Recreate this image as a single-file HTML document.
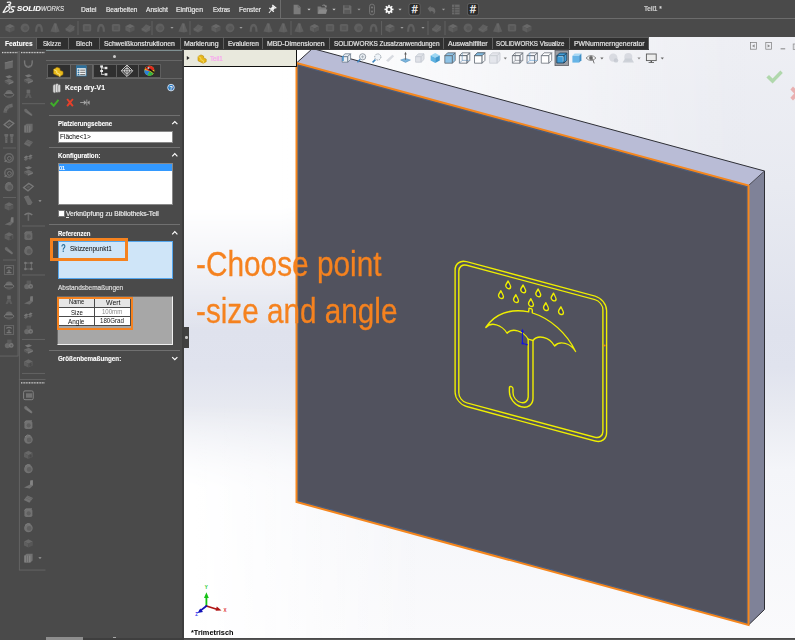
<!DOCTYPE html>
<html lang="de"><head><meta charset="utf-8"><title>SOLIDWORKS - Teil1</title>
<style>
html,body{margin:0;padding:0;}
body{width:795px;height:640px;overflow:hidden;background:#4a4a4a;position:relative;font-family:"Liberation Sans",sans-serif;}
.t{position:absolute;white-space:nowrap;transform-origin:0 50%;display:block;}
.r{position:absolute;}
svg{position:absolute;left:0;top:0;overflow:visible;}
</style></head><body>
<div class="r" style="left:184px;top:37px;width:611px;height:601px;background:linear-gradient(to bottom,#eeeff4 0%,#e8eaf1 25%,#dfe2ed 49%,#e0e3ee 55%,#e8eaf1 62%,#f4f5f9 72%,#fafafc 100%);"></div>
<div class="r" style="left:184px;top:37px;width:611px;height:601px;background:linear-gradient(to right,#ffffff 0%,#ffffff 16%,rgba(255,255,255,0.45) 55%,rgba(255,255,255,0) 92%);-webkit-mask-image:linear-gradient(to bottom,#000 0%,#000 28%,rgba(0,0,0,0) 49%);mask-image:linear-gradient(to bottom,#000 0%,#000 28%,rgba(0,0,0,0) 49%);"></div>
<div class="r" style="left:184px;top:37px;width:611px;height:601px;background:linear-gradient(to right,#ffffff 0%,rgba(255,255,255,0) 40%);-webkit-mask-image:linear-gradient(to bottom,rgba(0,0,0,0) 61%,#000 75%);mask-image:linear-gradient(to bottom,rgba(0,0,0,0) 61%,#000 75%);"></div>
<svg width="795" height="640" viewBox="0 0 795 640">
<polygon points="296.5,63 312.5,48.5 764.5,171 748.5,185.5" fill="#b9bcd6"/>
<polygon points="748.5,185.5 764.5,171 764.5,609.5 748.5,625" fill="#7f8298"/>
<polygon points="296.5,63 748.5,185.5 748.5,625 296.5,502" fill="#51525e"/>
<polyline points="296.5,63 312.5,48.5 764.5,171 764.5,609.5 748.5,625" fill="none" stroke="#2e2f36" stroke-width="1"/>
<line x1="748.5" y1="185.5" x2="764.5" y2="171" stroke="#3c3d47" stroke-width="0.9"/>
<polygon points="298,65.2 747,186.9 747,622.8 298,500.6" fill="none" stroke="#4a6b9c" stroke-width="0.8" opacity="0.7"/>
<polygon points="296.5,63 748.5,185.5 748.5,625 296.5,502" fill="none" stroke="#f5871f" stroke-width="2" stroke-linejoin="miter"/>
<g transform="translate(530.6,0) skewY(15) translate(-530.6,0)" fill="none" stroke="#efef00" stroke-width="1.4" stroke-linecap="round" stroke-linejoin="round">
<rect x="455.1" y="278.8" width="151.5" height="144.9" rx="11.5"/>
<rect x="458.8" y="282.4" width="144.1" height="137.6" rx="8"/>
<path d="M508.2,287.0 C509.2,289.2 510.65,290.95 510.65,292.15 A2.45,2.45 0 1 1 505.75,292.15 C505.75,290.95 507.2,289.2 508.2,287.0 Z" fill="#26266c" fill-opacity="0.45"/>
<path d="M523.2,287.0 C524.2,289.2 525.6500000000001,290.95 525.6500000000001,292.15 A2.45,2.45 0 1 1 520.75,292.15 C520.75,290.95 522.2,289.2 523.2,287.0 Z" fill="#26266c" fill-opacity="0.45"/>
<path d="M538.25,287.0 C539.25,289.2 540.7,290.95 540.7,292.15 A2.45,2.45 0 1 1 535.8,292.15 C535.8,290.95 537.25,289.2 538.25,287.0 Z" fill="#26266c" fill-opacity="0.45"/>
<path d="M553.6,287.0 C554.6,289.2 556.0500000000001,290.95 556.0500000000001,292.15 A2.45,2.45 0 1 1 551.15,292.15 C551.15,290.95 552.6,289.2 553.6,287.0 Z" fill="#26266c" fill-opacity="0.45"/>
<path d="M501,298.70000000000005 C502,300.90000000000003 503.45,302.65000000000003 503.45,303.85 A2.45,2.45 0 1 1 498.55,303.85 C498.55,302.65000000000003 500,300.90000000000003 501,298.70000000000005 Z" fill="#26266c" fill-opacity="0.45"/>
<path d="M516,298.70000000000005 C517,300.90000000000003 518.45,302.65000000000003 518.45,303.85 A2.45,2.45 0 1 1 513.55,303.85 C513.55,302.65000000000003 515,300.90000000000003 516,298.70000000000005 Z" fill="#26266c" fill-opacity="0.45"/>
<path d="M531,298.70000000000005 C532,300.90000000000003 533.45,302.65000000000003 533.45,303.85 A2.45,2.45 0 1 1 528.55,303.85 C528.55,302.65000000000003 530,300.90000000000003 531,298.70000000000005 Z" fill="#26266c" fill-opacity="0.45"/>
<path d="M546,298.70000000000005 C547,300.90000000000003 548.45,302.65000000000003 548.45,303.85 A2.45,2.45 0 1 1 543.55,303.85 C543.55,302.65000000000003 545,300.90000000000003 546,298.70000000000005 Z" fill="#26266c" fill-opacity="0.45"/>
<path d="M561,298.70000000000005 C562,300.90000000000003 563.45,302.65000000000003 563.45,303.85 A2.45,2.45 0 1 1 558.55,303.85 C558.55,302.65000000000003 560,300.90000000000003 561,298.70000000000005 Z" fill="#26266c" fill-opacity="0.45"/>
<path d="M485.8,339.5 A52,52 0 0 1 528.6,312.4 L528.9,309.6 Q528.9,308.6 529.9,308.6 L531.3,308.6 Q532.3,308.6 532.3,309.6 L532.3,312.4 A52,52 0 0 1 575.6,339.5 A13,13 0 0 0 554.6,339.5 A13.2,13.2 0 0 0 533,339.8 L528.2,339.8 A13.2,13.2 0 0 0 507,339.5 A13,13 0 0 0 485.8,339.5 Z"/>
<path d="M533,339.8 L533,397.5 A11.8,11.8 0 0 1 509.4,397.5 L509.4,393.5 A1.8,1.8 0 0 1 513,393.5 L513,397.5 A7.6,7.6 0 0 0 528.2,397.5 L528.2,339.8"/>
</g>
<g stroke="#1010e8" fill="#1010e8" stroke-width="1"><line x1="522.4" y1="343.5" x2="522.4" y2="331"/><polygon points="522.4,328.8 521,332 523.8,332" stroke="none"/><line x1="522.4" y1="343.5" x2="526" y2="344.3"/><circle cx="522.6" cy="343.4" r="1.1" stroke="none"/><circle cx="526.8" cy="344.6" r="0.9" stroke="none"/></g>
<circle cx="604.6" cy="345.6" r="1" fill="#e8861f"/>
<path d="M766.4,77.6 L769,75 L772.6,78.6 L780.4,70.6 L782.8,73 L772.6,83.6 Z" fill="#add6a8" opacity="0.95"/>
<path d="M790.4,89.4 L793,86.6 L795,88.6 L795,98.4 L793,100.6 L790.4,97.8 L794.2,93.6 Z" fill="#e9acac" opacity="0.95"/>
<g stroke-linecap="round"><line x1="206.4" y1="606" x2="206.4" y2="597" stroke="#15c215" stroke-width="1.8"/><polygon points="206.4,592.3 204,598 208.8,598" fill="#15c215"/><line x1="206.4" y1="606" x2="216" y2="609" stroke="#b01414" stroke-width="1.8"/><polygon points="221.5,610.4 215.6,610.8 216.8,606.6" fill="#b01414"/><line x1="206.4" y1="606" x2="200.5" y2="610.6" stroke="#1212b8" stroke-width="1.8"/><polygon points="197.6,613 200.2,608.6 203,612" fill="#1212b8"/></g>
<text x="204.8" y="588.6" font-size="4.6" font-weight="bold" fill="#20c820" font-family="Liberation Sans, sans-serif">Y</text>
<text x="223.6" y="611.6" font-size="4.6" font-weight="bold" fill="#e03030" font-family="Liberation Sans, sans-serif">X</text>
<text x="195.2" y="616" font-size="4.6" font-weight="bold" fill="#3030f0" font-family="Liberation Sans, sans-serif">Z</text>
</svg>
<span class="t" style="left:196.00px;top:242.87px;font-size:35.6px;line-height:42.72px;color:#f5821f;transform:scaleX(0.8378);-webkit-text-stroke:0.3px #f5821f;">-Choose point</span>
<span class="t" style="left:196.00px;top:289.77px;font-size:35.6px;line-height:42.72px;color:#f5821f;transform:scaleX(0.8349);-webkit-text-stroke:0.3px #f5821f;">-size and angle</span>
<span class="t" style="left:190.60px;top:628.86px;font-size:7.2px;line-height:8.64px;color:#000;transform:scaleX(1.0236);font-weight:bold;">*Trimetrisch</span>
<div class="r" style="left:184px;top:50px;width:112px;height:16px;background:#e9e9dd;border-right:0.8px solid #111;border-bottom:0.9px solid #111;"></div>
<svg width="795" height="640"><polygon points="186.8,56 189.6,58 186.8,60" fill="#222"/><path d="M198,56.5 l3,-1.6 l2.6,1.2 l0,1.8 l2.6,1.2 l0,2.6 l-3,1.6 l-5.2,-2.6 Z" fill="#e8b818" stroke="#b88a08" stroke-width="0.6"/><path d="M198,56.5 l2.8,1.3 l0,1.8 l2.6,1.2 l0,2.4" fill="none" stroke="#fff2a0" stroke-width="0.5"/></svg>
<span class="t" style="left:210.20px;top:54.50px;font-size:7.3px;line-height:8.76px;color:#f7a3ee;transform:scaleX(0.8525);-webkit-text-stroke:0.2px #f7a3ee;">Teil1</span>
<div class="r" style="left:184px;top:638.5px;width:611px;height:1.5px;background:#565656;"></div>
<div class="r" style="left:0px;top:0px;width:795px;height:37px;background:#4a4a4a;"></div>
<div class="r" style="left:0px;top:18px;width:795px;height:0.9px;background:#6c6c6c;"></div>
<div class="r" style="left:280px;top:0px;width:0.9px;height:18px;background:#6c6c6c;"></div>
<svg width="795" height="640"><g fill="none" stroke="#f4f4f4" stroke-width="1.3" stroke-linecap="round" stroke-linejoin="round"><path d="M7.4,2.4 Q10.6,1.6 10.8,3.2 Q10.6,4.6 8.6,5 Q10.4,5.2 10,6.4"/><path d="M3.2,12.4 L6.8,6.4 Q10.2,6.8 9.2,9.2 Q8,11.6 3.2,12.4 Z"/><path d="M14.8,6.8 Q11.4,6 10.9,7.8 Q10.8,9 12.6,9.6 Q14.2,10.4 13.2,11.6 Q12,12.6 9.4,12"/></g></svg>
<span class="t" style="left:17.10px;top:4.98px;font-size:6.7px;line-height:8.04px;color:#ffffff;transform:scaleX(1.1674);-webkit-text-stroke:0.1px #ffffff;font-weight:bold;font-style:italic;">SOLID</span>
<span class="t" style="left:40.50px;top:4.98px;font-size:6.7px;line-height:8.04px;color:#dcdcdc;transform:scaleX(0.9126);-webkit-text-stroke:0.2px #dcdcdc;font-style:italic;">WORKS</span>
<span class="t" style="left:81.30px;top:5.67px;font-size:6.4px;line-height:7.68px;color:#e6e6e6;transform:scaleX(1.0441);-webkit-text-stroke:0.2px #e6e6e6;">Datei</span>
<span class="t" style="left:105.70px;top:5.67px;font-size:6.4px;line-height:7.68px;color:#e6e6e6;transform:scaleX(1.0143);-webkit-text-stroke:0.2px #e6e6e6;">Bearbeiten</span>
<span class="t" style="left:146.00px;top:5.67px;font-size:6.4px;line-height:7.68px;color:#e6e6e6;transform:scaleX(1.0387);-webkit-text-stroke:0.2px #e6e6e6;">Ansicht</span>
<span class="t" style="left:176.00px;top:5.67px;font-size:6.4px;line-height:7.68px;color:#e6e6e6;transform:scaleX(1.0686);-webkit-text-stroke:0.2px #e6e6e6;">Einfügen</span>
<span class="t" style="left:212.60px;top:5.67px;font-size:6.4px;line-height:7.68px;color:#e6e6e6;transform:scaleX(0.9428);-webkit-text-stroke:0.2px #e6e6e6;">Extras</span>
<span class="t" style="left:238.50px;top:5.67px;font-size:6.4px;line-height:7.68px;color:#e6e6e6;transform:scaleX(1.0093);-webkit-text-stroke:0.2px #e6e6e6;">Fenster</span>
<span class="t" style="left:644.00px;top:5.38px;font-size:6.7px;line-height:8.04px;color:#dcdcdc;transform:scaleX(0.9809);-webkit-text-stroke:0.2px #dcdcdc;">Teil1 *</span>
<svg width="795" height="640"><g transform="translate(272,9.3) rotate(40)" fill="#f4f4f4"><rect x="-2.6" y="-4.2" width="5.2" height="1.3"/><rect x="-1.6" y="-3" width="3.2" height="3.2"/><rect x="-3" y="0.1" width="6" height="1.2"/><rect x="-0.45" y="1.2" width="0.9" height="3.6"/></g><path d="M293.6,4.8 h4.6 l2.4,2.4 v7 h-7 Z" fill="#7b7b7b"/><path d="M298.2,4.8 v2.4 h2.4" fill="none" stroke="#555" stroke-width="0.6"/><polygon points="307.4,8.799999999999999 310.6,8.799999999999999 309,10.6" fill="#cfcfcf"/><path d="M317.6,6.4 h3 l1,1.2 h4.6 v6.2 h-8.6 Z" fill="#7b7b7b"/><path d="M319.4,9.4 h8 l-1.6,4.4 h-8 Z" fill="#8a8a8a"/><path d="M322,5.2 q2.4,-1.6 4,0.6 l0.8,-0.6 l-0.2,2.2 l-2.2,-0.4 l0.8,-0.5 q-1.2,-1.4 -3,-0.8Z" fill="#8a8a8a"/><polygon points="332.4,8.799999999999999 335.6,8.799999999999999 334,10.6" fill="#cfcfcf"/><path d="M343,5.2 h7.2 l1.2,1.2 v7.4 h-8.4 Z" fill="#6a6a6a"/><rect x="344.6" y="5.2" width="4.4" height="2.8" fill="#585858"/><rect x="344.4" y="10" width="5.6" height="3.8" fill="#5a5a5a"/><polygon points="357.4,8.799999999999999 360.6,8.799999999999999 359,10.6" fill="#9a9a9a"/><rect x="369.6" y="4.2" width="4.8" height="10.6" rx="2.2" fill="none" stroke="#7b7b7b" stroke-width="0.9"/><circle cx="372" cy="7.4" r="1" fill="#7b7b7b"/><circle cx="372" cy="11.4" r="1" fill="#7b7b7b"/><g transform="translate(389,9.4)"><circle r="2.4" fill="none" stroke="#fafafa" stroke-width="1.7"/><rect x="-0.8" y="-4.5" width="1.6" height="1.8" fill="#fafafa" transform="rotate(0)"/><rect x="-0.8" y="-4.5" width="1.6" height="1.8" fill="#fafafa" transform="rotate(45)"/><rect x="-0.8" y="-4.5" width="1.6" height="1.8" fill="#fafafa" transform="rotate(90)"/><rect x="-0.8" y="-4.5" width="1.6" height="1.8" fill="#fafafa" transform="rotate(135)"/><rect x="-0.8" y="-4.5" width="1.6" height="1.8" fill="#fafafa" transform="rotate(180)"/><rect x="-0.8" y="-4.5" width="1.6" height="1.8" fill="#fafafa" transform="rotate(225)"/><rect x="-0.8" y="-4.5" width="1.6" height="1.8" fill="#fafafa" transform="rotate(270)"/><rect x="-0.8" y="-4.5" width="1.6" height="1.8" fill="#fafafa" transform="rotate(315)"/></g><polygon points="398.4,8.799999999999999 401.6,8.799999999999999 400,10.6" fill="#cfcfcf"/><rect x="409.0" y="3.5" width="11.2" height="11.8" rx="2.2" fill="#2b2b2b" stroke="#676767" stroke-width="0.8"/><text x="414.6" y="13.100000000000001" text-anchor="middle" font-size="10.6" fill="#ffffff" stroke="#ffffff" stroke-width="0.25" font-family="Liberation Sans, sans-serif">#</text><path d="M427.6,8.4 l3,-2.6 v1.6 q4.6,-0.4 4.8,4 q-0.2,2 -2,2.6 q1.4,-2.6 -2.8,-3 v1.8 Z" fill="#6a6a6a"/><polygon points="441.9,8.799999999999999 445.1,8.799999999999999 443.5,10.6" fill="#9a9a9a"/><rect x="452" y="4.6" width="7.6" height="9.8" fill="#6a6a6a"/><g stroke="#4b4b4b" stroke-width="0.7"><line x1="452" y1="7.4" x2="459.6" y2="7.4"/><line x1="452" y1="9.8" x2="459.6" y2="9.8"/><line x1="452" y1="12.2" x2="459.6" y2="12.2"/><line x1="454.6" y1="4.6" x2="454.6" y2="14.4"/></g><rect x="467.4" y="3.5" width="11.2" height="11.8" rx="2.2" fill="#2b2b2b" stroke="#676767" stroke-width="0.8"/><text x="473" y="13.100000000000001" text-anchor="middle" font-size="10.6" fill="#ffffff" stroke="#ffffff" stroke-width="0.25" font-family="Liberation Sans, sans-serif">#</text></svg>
<svg width="795" height="640"><polygon points="5.4,26.282 10,24.005000000000003 14.6,26.282 10,28.559" fill="#686868"/><polygon points="5.4,26.282 10,28.559 10,32.607 5.4,30.330000000000002" fill="#5f5f5f"/><polygon points="14.6,26.282 10,28.559 10,32.607 14.6,30.330000000000002" fill="#575757"/><circle cx="25" cy="27.8" r="4.4" fill="#5f5f5f"/><circle cx="25.6" cy="28.2" r="2.2" fill="#575757"/><path d="M35,31.8 q0,-8 4,-8 q4,0 4,8 h-2.2 q0,-5.4 -1.8,-5.4 q-1.8,0 -1.8,5.4 Z" fill="#5f5f5f"/><polygon points="50.4,31.400000000000002 54,23.4 56.4,23.4 59.6,31.400000000000002 56,32.4" fill="#5f5f5f"/><polygon points="54,23.4 56.4,23.4 56,32.4" fill="#686868"/><path d="M65.6,28.8 l4.4,-4.6 l4.4,2 v4 l-4.4,2.4 l-4.4,-2 Z" fill="#5f5f5f"/><path d="M65.6,28.8 l4.4,1.8 l4.4,-4.4" fill="none" stroke="#686868" stroke-width="0.8"/><rect x="82.8" y="24.0" width="8.4" height="7.6" rx="1.6" fill="#5f5f5f"/><rect x="84.8" y="26.0" width="4.6" height="4" fill="#575757"/><path d="M97,31.8 q0,-8 4,-8 q4,0 4,8 h-2.2 q0,-5.4 -1.8,-5.4 q-1.8,0 -1.8,5.4 Z" fill="#5f5f5f"/><rect x="111.8" y="24.0" width="8.4" height="7.6" rx="1.6" fill="#5f5f5f"/><rect x="113.8" y="26.0" width="4.6" height="4" fill="#575757"/><polygon points="125.4,26.282 130,24.005000000000003 134.6,26.282 130,28.559" fill="#686868"/><polygon points="125.4,26.282 130,28.559 130,32.607 125.4,30.330000000000002" fill="#5f5f5f"/><polygon points="134.6,26.282 130,28.559 130,32.607 134.6,30.330000000000002" fill="#575757"/><path d="M141.6,28.8 l4.4,-4.6 l4.4,2 v4 l-4.4,2.4 l-4.4,-2 Z" fill="#5f5f5f"/><path d="M141.6,28.8 l4.4,1.8 l4.4,-4.4" fill="none" stroke="#686868" stroke-width="0.8"/><circle cx="160" cy="27.8" r="4.4" fill="#5f5f5f"/><circle cx="160.6" cy="28.2" r="2.2" fill="#575757"/><polygon points="178.4,31.400000000000002 182,23.4 184.4,23.4 187.6,31.400000000000002 184,32.4" fill="#5f5f5f"/><polygon points="182,23.4 184.4,23.4 184,32.4" fill="#686868"/><path d="M193.6,28.8 l4.4,-4.6 l4.4,2 v4 l-4.4,2.4 l-4.4,-2 Z" fill="#5f5f5f"/><path d="M193.6,28.8 l4.4,1.8 l4.4,-4.4" fill="none" stroke="#686868" stroke-width="0.8"/><polygon points="211.4,26.282 216,24.005000000000003 220.6,26.282 216,28.559" fill="#686868"/><polygon points="211.4,26.282 216,28.559 216,32.607 211.4,30.330000000000002" fill="#5f5f5f"/><polygon points="220.6,26.282 216,28.559 216,32.607 220.6,30.330000000000002" fill="#575757"/><circle cx="230" cy="27.8" r="4.4" fill="#5f5f5f"/><circle cx="230.6" cy="28.2" r="2.2" fill="#575757"/><path d="M249.6,31.8 q0,-8 4,-8 q4,0 4,8 h-2.2 q0,-5.4 -1.8,-5.4 q-1.8,0 -1.8,5.4 Z" fill="#5f5f5f"/><polygon points="263.4,31.400000000000002 267,23.4 269.4,23.4 272.6,31.400000000000002 269,32.4" fill="#5f5f5f"/><polygon points="267,23.4 269.4,23.4 269,32.4" fill="#686868"/><polygon points="278.4,31.400000000000002 282,23.4 284.4,23.4 287.6,31.400000000000002 284,32.4" fill="#5f5f5f"/><polygon points="282,23.4 284.4,23.4 284,32.4" fill="#686868"/><polygon points="294.4,31.400000000000002 298,23.4 300.4,23.4 303.6,31.400000000000002 300,32.4" fill="#5f5f5f"/><polygon points="298,23.4 300.4,23.4 300,32.4" fill="#686868"/><polygon points="309.9,26.282 314.5,24.005000000000003 319.1,26.282 314.5,28.559" fill="#686868"/><polygon points="309.9,26.282 314.5,28.559 314.5,32.607 309.9,30.330000000000002" fill="#5f5f5f"/><polygon points="319.1,26.282 314.5,28.559 314.5,32.607 319.1,30.330000000000002" fill="#575757"/><rect x="325.8" y="24.0" width="8.4" height="7.6" rx="1.6" fill="#5f5f5f"/><rect x="327.8" y="26.0" width="4.6" height="4" fill="#575757"/><rect x="339.8" y="24.0" width="8.4" height="7.6" rx="1.6" fill="#5f5f5f"/><rect x="341.8" y="26.0" width="4.6" height="4" fill="#575757"/><circle cx="358.5" cy="27.8" r="4.4" fill="#5f5f5f"/><circle cx="359.1" cy="28.2" r="2.2" fill="#575757"/><path d="M369.6,31.8 q0,-8 4,-8 q4,0 4,8 h-2.2 q0,-5.4 -1.8,-5.4 q-1.8,0 -1.8,5.4 Z" fill="#5f5f5f"/><polygon points="385.4,26.282 390,24.005000000000003 394.6,26.282 390,28.559" fill="#686868"/><polygon points="385.4,26.282 390,28.559 390,32.607 385.4,30.330000000000002" fill="#5f5f5f"/><polygon points="394.6,26.282 390,28.559 390,32.607 394.6,30.330000000000002" fill="#575757"/><path d="M407,31.8 q0,-8 4,-8 q4,0 4,8 h-2.2 q0,-5.4 -1.8,-5.4 q-1.8,0 -1.8,5.4 Z" fill="#5f5f5f"/><path d="M432.1,28.8 l4.4,-4.6 l4.4,2 v4 l-4.4,2.4 l-4.4,-2 Z" fill="#5f5f5f"/><path d="M432.1,28.8 l4.4,1.8 l4.4,-4.4" fill="none" stroke="#686868" stroke-width="0.8"/><polygon points="448.4,26.282 453,24.005000000000003 457.6,26.282 453,28.559" fill="#686868"/><polygon points="448.4,26.282 453,28.559 453,32.607 448.4,30.330000000000002" fill="#5f5f5f"/><polygon points="457.6,26.282 453,28.559 453,32.607 457.6,30.330000000000002" fill="#575757"/><circle cx="468" cy="27.8" r="4.4" fill="#5f5f5f"/><circle cx="468.6" cy="28.2" r="2.2" fill="#575757"/><path d="M478.6,28.8 l4.4,-4.6 l4.4,2 v4 l-4.4,2.4 l-4.4,-2 Z" fill="#5f5f5f"/><path d="M478.6,28.8 l4.4,1.8 l4.4,-4.4" fill="none" stroke="#686868" stroke-width="0.8"/><polygon points="493.0,31.400000000000002 496.6,23.4 499.0,23.4 502.20000000000005,31.400000000000002 498.6,32.4" fill="#5f5f5f"/><polygon points="496.6,23.4 499.0,23.4 498.6,32.4" fill="#686868"/><rect x="507.8" y="24.0" width="8.4" height="7.6" rx="1.6" fill="#5f5f5f"/><rect x="509.8" y="26.0" width="4.6" height="4" fill="#575757"/><polygon points="522.4,26.282 527,24.005000000000003 531.6,26.282 527,28.559" fill="#686868"/><polygon points="522.4,26.282 527,28.559 527,32.607 522.4,30.330000000000002" fill="#5f5f5f"/><polygon points="531.6,26.282 527,28.559 527,32.607 531.6,30.330000000000002" fill="#575757"/><rect x="77.55" y="21" width="0.9" height="14" fill="#646464"/><rect x="151.55" y="21" width="0.9" height="14" fill="#646464"/><rect x="189.55" y="21" width="0.9" height="14" fill="#646464"/><rect x="290.55" y="21" width="0.9" height="14" fill="#646464"/><rect x="381.15000000000003" y="21" width="0.9" height="14" fill="#646464"/><rect x="427.55" y="21" width="0.9" height="14" fill="#646464"/><rect x="444.55" y="21" width="0.9" height="14" fill="#646464"/><polygon points="170.4,27.0 173.6,27.0 172,28.8" fill="#9c9c9c"/><polygon points="239.4,27.0 242.6,27.0 241,28.8" fill="#9c9c9c"/><polygon points="400.4,27.0 403.6,27.0 402,28.8" fill="#9c9c9c"/><polygon points="421.4,27.0 424.6,27.0 423,28.8" fill="#9c9c9c"/></svg>
<div class="r" style="left:0px;top:37px;width:648.6px;height:12.4px;background:#2f2f2f;"></div>
<div class="r" style="left:0px;top:37px;width:35.6px;height:12.6px;background:#4a4a4a;"></div>
<div class="r" style="left:0px;top:36.6px;width:648.6px;height:0.9px;background:#5c5c5c;"></div>
<div class="r" style="left:35.949999999999996px;top:37px;width:0.9px;height:12.4px;background:#5e5e5e;"></div>
<span class="t" style="left:42.80px;top:40.41px;font-size:6.5px;line-height:7.80px;color:#e2e2e2;transform:scaleX(0.9506);-webkit-text-stroke:0.2px #e2e2e2;">Skizze</span>
<div class="r" style="left:67.75px;top:37px;width:0.9px;height:12.4px;background:#5e5e5e;"></div>
<span class="t" style="left:75.50px;top:40.41px;font-size:6.5px;line-height:7.80px;color:#e2e2e2;transform:scaleX(1.0025);-webkit-text-stroke:0.2px #e2e2e2;">Blech</span>
<div class="r" style="left:99.14999999999999px;top:37px;width:0.9px;height:12.4px;background:#5e5e5e;"></div>
<span class="t" style="left:104.40px;top:40.41px;font-size:6.5px;line-height:7.80px;color:#e2e2e2;transform:scaleX(1.0550);-webkit-text-stroke:0.2px #e2e2e2;">Schweißkonstruktionen</span>
<div class="r" style="left:179.55px;top:37px;width:0.9px;height:12.4px;background:#5e5e5e;"></div>
<span class="t" style="left:184.40px;top:40.41px;font-size:6.5px;line-height:7.80px;color:#e2e2e2;transform:scaleX(1.0611);-webkit-text-stroke:0.2px #e2e2e2;">Markierung</span>
<div class="r" style="left:223.45000000000002px;top:37px;width:0.9px;height:12.4px;background:#5e5e5e;"></div>
<span class="t" style="left:227.70px;top:40.41px;font-size:6.5px;line-height:7.80px;color:#e2e2e2;transform:scaleX(1.0060);-webkit-text-stroke:0.2px #e2e2e2;">Evaluieren</span>
<div class="r" style="left:262.45px;top:37px;width:0.9px;height:12.4px;background:#5e5e5e;"></div>
<span class="t" style="left:267.40px;top:40.41px;font-size:6.5px;line-height:7.80px;color:#e2e2e2;transform:scaleX(1.0560);-webkit-text-stroke:0.2px #e2e2e2;">MBD-Dimensionen</span>
<div class="r" style="left:329.15000000000003px;top:37px;width:0.9px;height:12.4px;background:#5e5e5e;"></div>
<span class="t" style="left:334.00px;top:40.41px;font-size:6.5px;line-height:7.80px;color:#e2e2e2;transform:scaleX(0.9932);-webkit-text-stroke:0.2px #e2e2e2;">SOLIDWORKS Zusatzanwendungen</span>
<div class="r" style="left:442.85px;top:37px;width:0.9px;height:12.4px;background:#5e5e5e;"></div>
<span class="t" style="left:448.30px;top:40.41px;font-size:6.5px;line-height:7.80px;color:#e2e2e2;transform:scaleX(1.0774);-webkit-text-stroke:0.2px #e2e2e2;">Auswahlfilter</span>
<div class="r" style="left:491.85px;top:37px;width:0.9px;height:12.4px;background:#5e5e5e;"></div>
<span class="t" style="left:496.40px;top:40.41px;font-size:6.5px;line-height:7.80px;color:#e2e2e2;transform:scaleX(0.9531);-webkit-text-stroke:0.2px #e2e2e2;">SOLIDWORKS Visualize</span>
<div class="r" style="left:568.8499999999999px;top:37px;width:0.9px;height:12.4px;background:#5e5e5e;"></div>
<span class="t" style="left:574.00px;top:40.41px;font-size:6.5px;line-height:7.80px;color:#e2e2e2;transform:scaleX(1.0564);-webkit-text-stroke:0.2px #e2e2e2;">PWNummerngenerator</span>
<div class="r" style="left:648.2px;top:37px;width:0.9px;height:12.4px;background:#5e5e5e;"></div>
<span class="t" style="left:4.50px;top:40.34px;font-size:6.6px;line-height:7.92px;color:#ffffff;transform:scaleX(1.0068);-webkit-text-stroke:0.1px #ffffff;font-weight:bold;">Features</span>
<div class="r" style="left:46px;top:49.6px;width:136.3px;height:1.4px;background:#7f9092;"></div>
<div class="r" style="left:184px;top:49.3px;width:464.5px;height:0.8px;background:#3a3a3a;"></div>
<svg width="795" height="640"><rect x="17.6" y="51" width="0.9" height="305" fill="#666666"/><rect x="0" y="355.6" width="18.4" height="0.9" fill="#666666"/><rect x="18.9" y="51" width="0.9" height="519" fill="#666666"/><rect x="18.9" y="569.6" width="26.6" height="0.9" fill="#666666"/><rect x="18.9" y="379" width="26.6" height="0.9" fill="#666666"/><rect x="2.0" y="51.9" width="1" height="1.3" fill="#cfcfcf"/><rect x="3.6" y="51.9" width="1" height="1.3" fill="#cfcfcf"/><rect x="5.2" y="51.9" width="1" height="1.3" fill="#cfcfcf"/><rect x="6.8" y="51.9" width="1" height="1.3" fill="#cfcfcf"/><rect x="8.4" y="51.9" width="1" height="1.3" fill="#cfcfcf"/><rect x="10.0" y="51.9" width="1" height="1.3" fill="#cfcfcf"/><rect x="11.6" y="51.9" width="1" height="1.3" fill="#cfcfcf"/><rect x="13.2" y="51.9" width="1" height="1.3" fill="#cfcfcf"/><rect x="14.8" y="51.9" width="1" height="1.3" fill="#cfcfcf"/><rect x="16.4" y="51.9" width="1" height="1.3" fill="#cfcfcf"/><rect x="21.0" y="51.9" width="1" height="1.3" fill="#cfcfcf"/><rect x="22.6" y="51.9" width="1" height="1.3" fill="#cfcfcf"/><rect x="24.2" y="51.9" width="1" height="1.3" fill="#cfcfcf"/><rect x="25.8" y="51.9" width="1" height="1.3" fill="#cfcfcf"/><rect x="27.4" y="51.9" width="1" height="1.3" fill="#cfcfcf"/><rect x="29.0" y="51.9" width="1" height="1.3" fill="#cfcfcf"/><rect x="30.6" y="51.9" width="1" height="1.3" fill="#cfcfcf"/><rect x="32.2" y="51.9" width="1" height="1.3" fill="#cfcfcf"/><rect x="33.8" y="51.9" width="1" height="1.3" fill="#cfcfcf"/><rect x="35.4" y="51.9" width="1" height="1.3" fill="#cfcfcf"/><rect x="37.0" y="51.9" width="1" height="1.3" fill="#cfcfcf"/><rect x="38.6" y="51.9" width="1" height="1.3" fill="#cfcfcf"/><rect x="40.2" y="51.9" width="1" height="1.3" fill="#cfcfcf"/><rect x="41.8" y="51.9" width="1" height="1.3" fill="#cfcfcf"/><rect x="43.4" y="51.9" width="1" height="1.3" fill="#cfcfcf"/><rect x="21.0" y="382.2" width="1" height="1.3" fill="#cfcfcf"/><rect x="22.6" y="382.2" width="1" height="1.3" fill="#cfcfcf"/><rect x="24.2" y="382.2" width="1" height="1.3" fill="#cfcfcf"/><rect x="25.8" y="382.2" width="1" height="1.3" fill="#cfcfcf"/><rect x="27.4" y="382.2" width="1" height="1.3" fill="#cfcfcf"/><rect x="29.0" y="382.2" width="1" height="1.3" fill="#cfcfcf"/><rect x="30.6" y="382.2" width="1" height="1.3" fill="#cfcfcf"/><rect x="32.2" y="382.2" width="1" height="1.3" fill="#cfcfcf"/><rect x="33.8" y="382.2" width="1" height="1.3" fill="#cfcfcf"/><rect x="35.4" y="382.2" width="1" height="1.3" fill="#cfcfcf"/><rect x="37.0" y="382.2" width="1" height="1.3" fill="#cfcfcf"/><rect x="38.6" y="382.2" width="1" height="1.3" fill="#cfcfcf"/><rect x="40.2" y="382.2" width="1" height="1.3" fill="#cfcfcf"/><rect x="41.8" y="382.2" width="1" height="1.3" fill="#cfcfcf"/><rect x="43.4" y="382.2" width="1" height="1.3" fill="#cfcfcf"/><polygon points="4.8,62.4 12.8,60.4 12.8,67.8 4.8,69.6" fill="#6a6a6a"/><polygon points="4.8,62.4 12.8,60.4 12.8,61.6 4.8,63.6" fill="#787878"/><polygon points="5.4,76.6 9.6,75.2 12.6,76.8 8.4,78.4" fill="#787878"/><polygon points="4.6,80.4 9.4,78.8 13.4,81 8.6,83" fill="#6a6a6a"/><polygon points="4.6,80.4 8.6,83 8.6,84.8 4.6,82.2" fill="#5c5c5c"/><polygon points="13.4,81 8.6,83 8.6,84.8 13.4,82.8" fill="#787878"/><path d="M5.4,93.9 a3.6,3.9 0 0 1 7.2,0 Z" fill="#6a6a6a"/><ellipse cx="9" cy="94.7" rx="4.8" ry="2" fill="none" stroke="#787878" stroke-width="1"/><path d="M6,96.1 a3,2.2 0 0 0 6,0 Z" fill="#5c5c5c"/><path d="M5,112.6 q0.6,-6.4 7.6,-7.4" fill="none" stroke="#6a6a6a" stroke-width="3.4"/><path d="M4.4,111 l3,1.2 M6,108 l2.6,2 M8.6,105.6 l1.6,2.8" stroke="#5c5c5c" stroke-width="0.7"/><polygon points="4.2,124.6 9.4,120.4 13.8,123.4 8.6,127.8" fill="none" stroke="#787878" stroke-width="1.3"/><polygon points="6.6,124.4 9.3,122.4 11.4,123.7 8.7,125.8" fill="#5c5c5c"/><path d="M4.4,134.1 h3.8 v2 l-0.8,1 v6 h-2.2 v-6 l-0.8,-1 Z M9.8,134.1 h3.8 v2 l-0.8,1 v6 h-2.2 v-6 l-0.8,-1 Z" fill="#6a6a6a"/><path d="M5.8,137.5 h1.6 M5.8,139.5 h1.6 M11.2,137.5 h1.6 M11.2,139.5 h1.6" stroke="#5c5c5c" stroke-width="0.7"/><circle cx="9" cy="158" r="4.2" fill="none" stroke="#6a6a6a" stroke-width="1.5"/><circle cx="9.4" cy="158.4" r="1.9" fill="none" stroke="#787878" stroke-width="0.9"/><path d="M4.6,161.8 l2,-1.6" stroke="#787878" stroke-width="1.2"/><circle cx="9" cy="173" r="4.2" fill="none" stroke="#6a6a6a" stroke-width="1.5"/><circle cx="9.4" cy="173.4" r="1.9" fill="none" stroke="#787878" stroke-width="0.9"/><path d="M4.6,176.8 l2,-1.6" stroke="#787878" stroke-width="1.2"/><circle cx="9" cy="187" r="4.3" fill="#6a6a6a"/><circle cx="9.8" cy="187.4" r="2.4" fill="#5c5c5c"/><path d="M5.6,184.4 a4.3,4.3 0 0 1 5.4,-1.4" fill="none" stroke="#787878" stroke-width="0.9"/><polygon points="4.6,204.548 9,202.37 13.4,204.548 9,206.726" fill="#686868"/><polygon points="4.6,204.548 9,206.726 9,210.598 4.6,208.42" fill="#5f5f5f"/><polygon points="13.4,204.548 9,206.726 9,210.598 13.4,208.42" fill="#575757"/><polygon points="4.6,224.6 10.4,225.4 13.4,222.4 13.4,217.2 11,217.4 10.6,221.6" fill="#6a6a6a"/><polygon points="13.4,217.2 11,217.4 10.6,221.6 13.4,222.4" fill="#787878"/><polygon points="4.6,234.548 9,232.37 13.4,234.548 9,236.726" fill="#686868"/><polygon points="4.6,234.548 9,236.726 9,240.598 4.6,238.42" fill="#5f5f5f"/><polygon points="13.4,234.548 9,236.726 9,240.598 13.4,238.42" fill="#575757"/><ellipse cx="11.1" cy="237.6" rx="1.1" ry="1.5" fill="#4a4a4a"/><path d="M5,247.6 q1.8,-1.6 3,0.6 l4.6,4 q1.2,1.6 -0.6,2.2 l-5.4,-3.4 q-2.4,-1 -1.6,-3.4 Z" fill="#6a6a6a"/><path d="M7.4,249.8 l4.4,3.6" stroke="#787878" stroke-width="0.8"/><rect x="4.4" y="265.6" width="9.2" height="8.8" fill="none" stroke="#6a6a6a" stroke-width="0.9"/><path d="M6.2,268.4 q2.8,-2 5.6,0 M6.6,272.6 h4.8" stroke="#787878" stroke-width="1.1" fill="none"/><circle cx="9" cy="270.8" r="1.4" fill="#6a6a6a"/><path d="M5.4,285.4 a3.6,3.9 0 0 1 7.2,0 Z" fill="#6a6a6a"/><ellipse cx="9" cy="286.2" rx="4.8" ry="2" fill="none" stroke="#787878" stroke-width="1"/><path d="M6,287.6 a3,2.2 0 0 0 6,0 Z" fill="#5c5c5c"/><rect x="7.2" y="295.6" width="3.6" height="3.4" fill="#6a6a6a"/><path d="M7.6,299 h2.8 l2,5 h-2.2 l-1.2,-2.6 l-1.2,2.6 h-2.2 Z" fill="#5c5c5c"/><path d="M5.4,315.4 a3.6,3.9 0 0 1 7.2,0 Z" fill="#6a6a6a"/><ellipse cx="9" cy="316.2" rx="4.8" ry="2" fill="none" stroke="#787878" stroke-width="1"/><path d="M6,317.6 a3,2.2 0 0 0 6,0 Z" fill="#5c5c5c"/><rect x="4.4" y="325.6" width="9.2" height="8.8" fill="none" stroke="#6a6a6a" stroke-width="0.9"/><path d="M6.2,328.4 q2.8,-2 5.6,0 M6.6,332.6 h4.8" stroke="#787878" stroke-width="1.1" fill="none"/><circle cx="9" cy="330.8" r="1.4" fill="#6a6a6a"/><circle cx="7.4" cy="345.6" r="2.6" fill="#6a6a6a"/><circle cx="11.2" cy="345.4" r="2.4" fill="#787878"/><rect x="7.2" y="339.6" width="4.4" height="3.4" fill="#5c5c5c"/><circle cx="11.4" cy="345.6" r="1" fill="#5c5c5c"/><rect x="3" y="147.55" width="13" height="0.9" fill="#666666"/><rect x="3" y="197.05" width="13" height="0.9" fill="#666666"/><rect x="3" y="259.55" width="13" height="0.9" fill="#666666"/><path d="M24.599999999999998,60.4 q-0.6,6.4 3.8,6.8 q4.4,-0.4 3.8,-6.8" fill="none" stroke="#787878" stroke-width="1.4"/><path d="M26.4,65.4 l1.6,1.2 l1.4,-1 l1.4,0.8" fill="none" stroke="#6a6a6a" stroke-width="0.9"/><polygon points="24.799999999999997,75.6 29.0,74.2 32.0,75.8 27.799999999999997,77.4" fill="#787878"/><polygon points="24.0,79.4 28.799999999999997,77.8 32.8,80 28.0,82" fill="#6a6a6a"/><polygon points="24.0,79.4 28.0,82 28.0,83.8 24.0,81.2" fill="#5c5c5c"/><polygon points="32.8,80 28.0,82 28.0,83.8 32.8,81.8" fill="#787878"/><rect x="26.599999999999998" y="89.6" width="3.6" height="3.4" fill="#6a6a6a"/><path d="M27.0,93 h2.8 l2,5 h-2.2 l-1.2,-2.6 l-1.2,2.6 h-2.2 Z" fill="#5c5c5c"/><path d="M24.4,109.3 q1.8,-1.6 3,0.6 l4.6,4 q1.2,1.6 -0.6,2.2 l-5.4,-3.4 q-2.4,-1 -1.6,-3.4 Z" fill="#6a6a6a"/><path d="M26.799999999999997,111.5 l4.4,3.6" stroke="#787878" stroke-width="0.8"/><polygon points="24.4,125.6 26.799999999999997,123.8 32.6,123.8 32.6,130.6 30.4,132.4 24.4,132.4" fill="#6a6a6a"/><rect x="24.4" y="125.6" width="6" height="6.8" fill="#787878"/><path d="M26.4,125.6 v6.8 M28.4,125.6 v6.8" stroke="#5c5c5c" stroke-width="0.7"/><polygon points="23.799999999999997,144.1 27.4,139.5 33.0,141.9 29.4,146.7" fill="#6a6a6a"/><path d="M25.599999999999998,141.9 l5.6,2.6 M26.799999999999997,140.5 l5.4,2.4" stroke="#5c5c5c" stroke-width="0.7"/><path d="M23.799999999999997,157.6 l2.4,-2 l2,1 l2.4,-2 l2,1 l-2.4,2.2 l-2,-1 l-2.4,2.2 Z" fill="#787878"/><path d="M23.799999999999997,159.6 l2.4,-2 l2,1 l2.4,-2 l2,1 l-2.4,2.2 l-2,-1 l-2.4,2.2 Z" fill="#6a6a6a"/><polygon points="24.799999999999997,167.6 29.0,166.2 32.0,167.8 27.799999999999997,169.4" fill="#787878"/><polygon points="24.0,171.4 28.799999999999997,169.8 32.8,172 28.0,174" fill="#6a6a6a"/><polygon points="24.0,171.4 28.0,174 28.0,175.8 24.0,173.2" fill="#5c5c5c"/><polygon points="32.8,172 28.0,174 28.0,175.8 32.8,173.8" fill="#787878"/><polygon points="23.599999999999998,187.6 28.799999999999997,183.4 33.199999999999996,186.4 28.0,190.8" fill="none" stroke="#787878" stroke-width="1.3"/><polygon points="26.0,187.4 28.7,185.4 30.799999999999997,186.7 28.099999999999998,188.8" fill="#5c5c5c"/><path d="M24.2,197.4 l3.6,7.6 q3.4,0.6 4.8,-2.6 l-4,-6.2 Z" fill="#6a6a6a"/><path d="M24.2,197.4 q2,-1.4 4.4,-1.2" stroke="#787878" stroke-width="1" fill="none"/><path d="M24.0,214.4 q4.4,-4 8.8,0 l-1,1.2 q-3.4,-2.6 -6.8,0 Z" fill="#787878"/><rect x="27.599999999999998" y="213.8" width="1.6" height="7" fill="#6a6a6a"/><rect x="24.4" y="232" width="8" height="8" rx="1.8" fill="#6a6a6a"/><circle cx="28.7" cy="236.3" r="2.1" fill="#5c5c5c"/><path d="M24.4,233.4 l1.6,-1.6 h6" fill="none" stroke="#787878" stroke-width="0.8"/><circle cx="28.4" cy="251" r="4.3" fill="#6a6a6a"/><circle cx="29.2" cy="251.4" r="2.4" fill="#5c5c5c"/><path d="M25.0,248.4 a4.3,4.3 0 0 1 5.4,-1.4" fill="none" stroke="#787878" stroke-width="0.9"/><rect x="25.4" y="263" width="6" height="6" fill="none" stroke="#6a6a6a" stroke-width="1"/><g fill="#787878"><circle cx="25.4" cy="263" r="1.3"/><circle cx="31.4" cy="263" r="1.3"/><circle cx="25.4" cy="269" r="1.3"/><circle cx="31.4" cy="269" r="1.3"/></g><circle cx="26.799999999999997" cy="286.6" r="2.6" fill="#6a6a6a"/><circle cx="30.599999999999998" cy="286.4" r="2.4" fill="#787878"/><rect x="26.599999999999998" y="280.6" width="4.4" height="3.4" fill="#5c5c5c"/><circle cx="30.799999999999997" cy="286.6" r="1" fill="#5c5c5c"/><polygon points="24.0,303.6 29.799999999999997,304.4 32.8,301.4 32.8,296.2 30.4,296.4 30.0,300.6" fill="#6a6a6a"/><polygon points="32.8,296.2 30.4,296.4 30.0,300.6 32.8,301.4" fill="#787878"/><path d="M23.799999999999997,315.6 l2.4,-2 l2,1 l2.4,-2 l2,1 l-2.4,2.2 l-2,-1 l-2.4,2.2 Z" fill="#787878"/><path d="M23.799999999999997,317.6 l2.4,-2 l2,1 l2.4,-2 l2,1 l-2.4,2.2 l-2,-1 l-2.4,2.2 Z" fill="#6a6a6a"/><circle cx="26.799999999999997" cy="331.6" r="2.6" fill="#6a6a6a"/><circle cx="30.599999999999998" cy="331.4" r="2.4" fill="#787878"/><rect x="26.599999999999998" y="325.6" width="4.4" height="3.4" fill="#5c5c5c"/><circle cx="30.799999999999997" cy="331.6" r="1" fill="#5c5c5c"/><polygon points="24.799999999999997,345.6 29.0,344.2 32.0,345.8 27.799999999999997,347.4" fill="#787878"/><polygon points="24.0,349.4 28.799999999999997,347.8 32.8,350 28.0,352" fill="#6a6a6a"/><polygon points="24.0,349.4 28.0,352 28.0,353.8 24.0,351.2" fill="#5c5c5c"/><polygon points="32.8,350 28.0,352 28.0,353.8 32.8,351.8" fill="#787878"/><polygon points="24.0,361.548 28.4,359.37 32.8,361.548 28.4,363.726" fill="#686868"/><polygon points="24.0,361.548 28.4,363.726 28.4,367.598 24.0,365.42" fill="#5f5f5f"/><polygon points="32.8,361.548 28.4,363.726 28.4,367.598 32.8,365.42" fill="#575757"/><ellipse cx="30.5" cy="364.6" rx="1.1" ry="1.5" fill="#4a4a4a"/><rect x="23.599999999999998" y="390.90000000000003" width="9.6" height="8.8" rx="1.4" fill="none" stroke="#848484" stroke-width="1"/><rect x="26.0" y="393.3" width="6" height="4.4" fill="#727272"/><path d="M24.4,406.6 q1.8,-1.6 3,0.6 l4.6,4 q1.2,1.6 -0.6,2.2 l-5.4,-3.4 q-2.4,-1 -1.6,-3.4 Z" fill="#727272"/><path d="M26.799999999999997,408.8 l4.4,3.6" stroke="#848484" stroke-width="0.8"/><rect x="24.4" y="421" width="8" height="8" rx="1.8" fill="#727272"/><circle cx="28.7" cy="425.3" r="2.1" fill="#606060"/><path d="M24.4,422.4 l1.6,-1.6 h6" fill="none" stroke="#848484" stroke-width="0.8"/><circle cx="28.4" cy="439.5" r="4.3" fill="#727272"/><circle cx="29.2" cy="439.9" r="2.4" fill="#606060"/><path d="M25.0,436.9 a4.3,4.3 0 0 1 5.4,-1.4" fill="none" stroke="#848484" stroke-width="0.9"/><polygon points="24.0,453.048 28.4,450.87 32.8,453.048 28.4,455.226" fill="#686868"/><polygon points="24.0,453.048 28.4,455.226 28.4,459.098 24.0,456.92" fill="#5f5f5f"/><polygon points="32.8,453.048 28.4,455.226 28.4,459.098 32.8,456.92" fill="#575757"/><ellipse cx="30.5" cy="456.1" rx="1.1" ry="1.5" fill="#4a4a4a"/><circle cx="28.4" cy="469" r="4.3" fill="#727272"/><circle cx="29.2" cy="469.4" r="2.4" fill="#606060"/><path d="M25.0,466.4 a4.3,4.3 0 0 1 5.4,-1.4" fill="none" stroke="#848484" stroke-width="0.9"/><polygon points="24.0,487.6 29.799999999999997,488.4 32.8,485.4 32.8,480.2 30.4,480.4 30.0,484.6" fill="#727272"/><polygon points="32.8,480.2 30.4,480.4 30.0,484.6 32.8,485.4" fill="#848484"/><polygon points="23.799999999999997,500.1 27.4,495.5 33.0,497.9 29.4,502.7" fill="#727272"/><path d="M25.599999999999998,497.9 l5.6,2.6 M26.799999999999997,496.5 l5.4,2.4" stroke="#606060" stroke-width="0.7"/><rect x="24.4" y="509" width="8" height="8" rx="1.8" fill="#727272"/><circle cx="28.7" cy="513.3" r="2.1" fill="#606060"/><path d="M24.4,510.4 l1.6,-1.6 h6" fill="none" stroke="#848484" stroke-width="0.8"/><circle cx="28.4" cy="528" r="4.3" fill="#727272"/><circle cx="29.2" cy="528.4" r="2.4" fill="#606060"/><path d="M25.0,525.4 a4.3,4.3 0 0 1 5.4,-1.4" fill="none" stroke="#848484" stroke-width="0.9"/><polygon points="24.0,541.548 28.4,539.37 32.8,541.548 28.4,543.726" fill="#686868"/><polygon points="24.0,541.548 28.4,543.726 28.4,547.598 24.0,545.42" fill="#5f5f5f"/><polygon points="32.8,541.548 28.4,543.726 28.4,547.598 32.8,545.42" fill="#575757"/><polygon points="24.4,555.6 26.799999999999997,553.8 32.6,553.8 32.6,560.6 30.4,562.4 24.4,562.4" fill="#727272"/><rect x="24.4" y="555.6" width="6" height="6.8" fill="#848484"/><path d="M26.4,555.6 v6.8 M28.4,555.6 v6.8" stroke="#606060" stroke-width="0.7"/><rect x="22" y="103.25" width="23" height="0.9" fill="#666666"/><rect x="22" y="225.55" width="23" height="0.9" fill="#666666"/><rect x="22" y="274.55" width="23" height="0.9" fill="#666666"/><rect x="22" y="338.95" width="23" height="0.9" fill="#666666"/><rect x="22" y="372.95" width="23" height="0.9" fill="#666666"/><polygon points="38.4,200.2 41.6,200.2 40,202" fill="#9c9c9c"/><polygon points="38.4,557.2 41.6,557.2 40,559" fill="#9c9c9c"/></svg>
<div class="r" style="left:182.3px;top:50.8px;width:1.7px;height:587px;background:#3e3e3e;"></div>
<div class="r" style="left:46px;top:60.2px;width:136px;height:0.9px;background:#666666;"></div>
<div class="r" style="left:112.6px;top:54.9px;width:3.6px;height:3.6px;border-radius:50%;background:#cdcdcd;"></div>
<div class="r" style="left:46.6px;top:63.6px;width:114px;height:14.4px;background:#2f2f2f;border:0.8px solid #5e5e5e;box-sizing:border-box;"></div>
<div class="r" style="left:70px;top:63.6px;width:23px;height:15px;background:#4a4a4a;border-left:0.8px solid #666;border-right:0.8px solid #666;border-top:0.8px solid #666;box-sizing:border-box;"></div>
<div class="r" style="left:92.6px;top:64px;width:0.8px;height:13.6px;background:#5e5e5e;"></div>
<div class="r" style="left:115.6px;top:64px;width:0.8px;height:13.6px;background:#5e5e5e;"></div>
<div class="r" style="left:137.6px;top:64px;width:0.8px;height:13.6px;background:#5e5e5e;"></div>
<div class="r" style="left:46px;top:77.8px;width:24px;height:0.8px;background:#666;"></div>
<div class="r" style="left:93px;top:77.8px;width:89px;height:0.8px;background:#666;"></div>
<svg width="795" height="640"><path d="M53.6,69.4 l3.4,-2.2 l3,1.2 l0,2 l3,1.2 l0,3 l-3.4,2 l-6,-2.8 Z" fill="#e9bb1c" stroke="#a87c06" stroke-width="0.6"/><path d="M53.8,69.6 l3,1.4 l0,2 l3,1.3 l0,2.6" fill="none" stroke="#fff3a8" stroke-width="0.7"/><rect x="76.4" y="65.8" width="9.8" height="10.2" fill="#f4f4f4" stroke="#2c6f9c" stroke-width="0.8"/><rect x="76.4" y="65.8" width="9.8" height="2.4" fill="#2c6f9c"/><g fill="#2c6f9c"><rect x="77.6" y="69.4" width="1.8" height="1.5"/><rect x="77.6" y="71.6" width="1.8" height="1.5"/><rect x="77.6" y="73.8" width="1.8" height="1.5"/></g><g fill="#777"><rect x="80.2" y="69.6" width="5" height="1.1"/><rect x="80.2" y="71.8" width="5" height="1.1"/><rect x="80.2" y="74" width="5" height="1.1"/></g><g fill="none" stroke="#e8e8e8" stroke-width="0.8"><path d="M101.6,66.2 v8.6 M101.6,68 h3 M101.6,74.4 h3"/></g><g fill="#e8e8e8"><rect x="100.2" y="65.4" width="2.8" height="2.2"/><rect x="104.6" y="66.8" width="2.8" height="2.4"/><rect x="104.6" y="73.2" width="2.8" height="2.4"/><rect x="100.2" y="70" width="2.8" height="2"/></g><g fill="none" stroke="#e8e8e8" stroke-width="0.8"><circle cx="127" cy="70.8" r="2.6"/><polygon points="127,65 132.8,70.8 127,76.6 121.2,70.8"/><path d="M127,65.6 v10.4 M121.8,70.8 h10.4"/></g><circle cx="149.4" cy="70.8" r="5" fill="#e8c81e"/><path d="M144.9,68.6 A5,5 0 0 1 154.3,69.8 L149.4,71.4 Z" fill="#e02a20"/><path d="M144.5,70 A5,5 0 0 0 147.6,75.5 L149.6,71.2 Z" fill="#2a7fd8"/><path d="M147.6,75.5 A5,5 0 0 0 153.4,73.8 L149.6,71.2 Z" fill="#2fb044"/><path d="M146.6,66.9 L153.9,72.6" stroke="#161616" stroke-width="1.7"/><circle cx="148.4" cy="68" r="1.1" fill="#fff" opacity="0.75"/><g fill="#dedede" stroke="#6a6a6a" stroke-width="0.6"><path d="M53,85.4 l1.6,-1.2 l1.6,1 v6.8 l-1.6,1 l-1.6,-1 Z"/><path d="M55.4,84.6 l1.6,-1.2 l1.6,1 v7.4 l-1.6,1 l-1.6,-1 Z"/><path d="M57.8,85.4 l1.4,-1 l1.2,0.8 v6.4 l-1.3,0.9 l-1.3,-0.8 Z"/></g><circle cx="171" cy="87.6" r="3.3" fill="#2a78c0" stroke="#dfe9f4" stroke-width="0.9"/><text x="171" y="89.7" text-anchor="middle" font-size="5.6" font-weight="bold" fill="#fff" font-family="Liberation Sans, sans-serif">?</text><path d="M50,103.4 l1.6,-1.4 l2,2.2 l4.2,-5 l1.4,1.2 l-5.4,6.8 Z" fill="#3fae2a"/><path d="M66.4,99.6 l1.4,-1.2 l2.2,2.6 l2.2,-2.6 l1.4,1.2 l-2.4,3 l2.4,3 l-1.4,1.2 l-2.2,-2.6 l-2.2,2.6 l-1.4,-1.2 l2.4,-3 Z" fill="#e8402a"/><g fill="#a4a4a4"><rect x="80.2" y="102.1" width="4" height="0.9"/><polygon points="83.8,100.2 86.6,102.55 83.8,104.9"/><rect x="86.4" y="99.6" width="0.9" height="5.9"/><polygon points="89.6,100.4 87.2,102.55 89.6,104.7"/></g><polyline points="172.20000000000002,124.1 174.8,121.5 177.4,124.1" fill="none" stroke="#ffffff" stroke-width="1.2"/><polyline points="172.20000000000002,156.3 174.8,153.7 177.4,156.3" fill="none" stroke="#ffffff" stroke-width="1.2"/><polyline points="172.20000000000002,234.3 174.8,231.7 177.4,234.3" fill="none" stroke="#ffffff" stroke-width="1.2"/><polyline points="172.20000000000002,357.09999999999997 174.8,359.7 177.4,357.09999999999997" fill="none" stroke="#ffffff" stroke-width="1.2"/></svg>
<span class="t" style="left:65.00px;top:84.19px;font-size:7.0px;line-height:8.40px;color:#ffffff;transform:scaleX(0.9792);-webkit-text-stroke:0.1px #ffffff;font-weight:bold;">Keep dry-V1</span>
<div class="r" style="left:49px;top:114.9px;width:130.6px;height:1px;background:#707070;"></div>
<div class="r" style="left:49px;top:147.1px;width:130.6px;height:1px;background:#707070;"></div>
<div class="r" style="left:49px;top:224.0px;width:130.6px;height:1px;background:#707070;"></div>
<div class="r" style="left:49px;top:349.9px;width:130.6px;height:1px;background:#707070;"></div>
<span class="t" style="left:57.70px;top:119.84px;font-size:6.6px;line-height:7.92px;color:#ffffff;transform:scaleX(0.9311);-webkit-text-stroke:0.1px #ffffff;font-weight:bold;">Platzierungsebene</span>
<div class="r" style="left:57.6px;top:131px;width:115.4px;height:12.4px;background:#ffffff;border:0.6px solid #888;box-sizing:border-box;"></div>
<span class="t" style="left:60.20px;top:133.07px;font-size:6.4px;line-height:7.68px;color:#000;transform:scaleX(1.0184);">Fläche&lt;1&gt;</span>
<span class="t" style="left:57.70px;top:151.64px;font-size:6.6px;line-height:7.92px;color:#ffffff;transform:scaleX(0.9349);-webkit-text-stroke:0.1px #ffffff;font-weight:bold;">Konfiguration:</span>
<div class="r" style="left:57.6px;top:162.8px;width:115.4px;height:42.6px;background:#ffffff;border:0.6px solid #888;box-sizing:border-box;"></div>
<div class="r" style="left:58.6px;top:164px;width:113.4px;height:6.8px;background:#3399ff;"></div>
<span class="t" style="left:59.40px;top:164.49px;font-size:6.2px;line-height:7.44px;color:#ffffff;transform:scaleX(0.8990);-webkit-text-stroke:0.2px #ffffff;">01</span>
<div class="r" style="left:57.8px;top:210px;width:6.8px;height:6.9px;background:#ffffff;border:0.6px solid #777;box-sizing:border-box;"></div>
<span class="t" style="left:66.00px;top:210.37px;font-size:6.4px;line-height:7.68px;color:#e8e8e8;transform:scaleX(1.0456);-webkit-text-stroke:0.2px #e8e8e8;">Verknüpfung zu Bibliotheks-Teil</span>
<div class="r" style="left:66px;top:217px;width:3.4px;height:0.6px;background:#e8e8e8;"></div>
<span class="t" style="left:57.70px;top:229.64px;font-size:6.6px;line-height:7.92px;color:#ffffff;transform:scaleX(0.9135);-webkit-text-stroke:0.1px #ffffff;font-weight:bold;">Referenzen</span>
<div class="r" style="left:57.5px;top:240.6px;width:115.6px;height:38.6px;background:#cfe5f8;border:0.9px solid #55a7ee;box-sizing:border-box;"></div>
<span class="t" style="left:61.40px;top:242.75px;font-size:10.4px;line-height:12.48px;color:#2a6f9c;transform:scaleX(0.7556);font-weight:bold;">?</span>
<span class="t" style="left:69.60px;top:245.27px;font-size:6.4px;line-height:7.68px;color:#000;transform:scaleX(1.0042);">Skizzenpunkt1</span>
<span class="t" style="left:57.70px;top:283.57px;font-size:6.4px;line-height:7.68px;color:#dcdcdc;transform:scaleX(1.0139);-webkit-text-stroke:0.2px #dcdcdc;">Abstandsbemaßungen</span>
<div class="r" style="left:57px;top:296px;width:116px;height:48.8px;background:#a7a7a7;border-top:1px solid #6a6a6a;border-left:1px solid #6a6a6a;border-right:1px solid #f0f0f0;border-bottom:1px solid #f0f0f0;box-sizing:border-box;"></div>
<div class="r" style="left:58.6px;top:298.4px;width:72px;height:27.6px;background:#4a4a4a;"></div>
<div class="r" style="left:59px;top:298.7px;width:35px;height:7.900000000000034px;background:#e6e6e6;"></div>
<div class="r" style="left:95px;top:298.7px;width:35px;height:7.900000000000034px;background:#e6e6e6;"></div>
<div class="r" style="left:59px;top:307.5px;width:35px;height:8.199999999999989px;background:#ffffff;"></div>
<div class="r" style="left:95px;top:307.5px;width:35px;height:8.199999999999989px;background:#ffffff;"></div>
<div class="r" style="left:59px;top:316.5px;width:35px;height:8.300000000000011px;background:#ffffff;"></div>
<div class="r" style="left:95px;top:316.5px;width:35px;height:8.300000000000011px;background:#ffffff;"></div>
<span class="t" style="left:68.70px;top:298.46px;font-size:7.2px;line-height:8.64px;color:#111;transform:scaleX(0.7966);">Name</span>
<span class="t" style="left:105.70px;top:299.06px;font-size:7.2px;line-height:8.64px;color:#111;transform:scaleX(0.9623);">Wert</span>
<span class="t" style="left:71.00px;top:308.56px;font-size:7.2px;line-height:8.64px;color:#111;transform:scaleX(0.8424);">Size</span>
<span class="t" style="left:102.10px;top:307.96px;font-size:7.2px;line-height:8.64px;color:#8c8c8c;transform:scaleX(0.8413);">100mm</span>
<span class="t" style="left:68.10px;top:317.56px;font-size:7.2px;line-height:8.64px;color:#111;transform:scaleX(0.8905);">Angle</span>
<span class="t" style="left:100.20px;top:316.96px;font-size:7.2px;line-height:8.64px;color:#111;transform:scaleX(0.8565);">180Grad</span>
<span class="t" style="left:57.70px;top:355.04px;font-size:6.6px;line-height:7.92px;color:#ffffff;transform:scaleX(0.9485);-webkit-text-stroke:0.1px #ffffff;font-weight:bold;">Größenbemaßungen:</span>
<div class="r" style="left:50.2px;top:237.6px;width:78px;height:23.1px;background:transparent;border:3px solid #f5821f;box-sizing:border-box;"></div>
<div class="r" style="left:56.6px;top:296.8px;width:76.7px;height:33.5px;background:transparent;border:2.9px solid #f5821f;box-sizing:border-box;"></div>
<div class="r" style="left:184px;top:327px;width:5px;height:21.4px;background:#404040;"></div>
<div class="r" style="left:185.2px;top:336.4px;width:2.4px;height:2.4px;border-radius:50%;background:#c8c8c8;"></div>
<svg width="795" height="640"><g opacity="1" fill="#e9eef4" stroke="#6a7a8c" stroke-width="0.8" stroke-linejoin="round"><rect x="342.2" y="56.599999999999994" width="5.6000000000000005" height="5.6000000000000005"/><polygon points="342.2,56.599999999999994 345.0,53.8 350.59999999999997,53.8 347.79999999999995,56.599999999999994"/><polygon points="347.79999999999995,56.599999999999994 350.59999999999997,53.8 350.59999999999997,59.400000000000006 347.79999999999995,62.2"/></g><path d="M343,56 v5" stroke="#3a8ac8" stroke-width="1.4"/><circle cx="362.6" cy="56.8" r="3.1" fill="#eef3f8" stroke="#8a929c" stroke-width="0.9"/><path d="M360.2,59.4 l-2.8,2.8" stroke="#3f86c0" stroke-width="1.5"/><path d="M361,56.8 h3.2 M362.6,55.2 v3.2" stroke="#8a929c" stroke-width="0.6"/><circle cx="377.8" cy="57" r="3.1" fill="#eef3f8" stroke="#8a929c" stroke-width="0.9" stroke-dasharray="1.4 0.9"/><path d="M375.4,59.6 l-2.8,2.8" stroke="#3f86c0" stroke-width="1.5"/><path d="M386,60.4 l6.4,-5.6 l1.8,1.4 l-6,5.8 Z" fill="#cfd3da" opacity="0.8"/><polygon points="400.6,60 405.5,58.4 410.4,60 405.5,62.4" fill="#7ab4dc" stroke="#4a86b4" stroke-width="0.5"/><path d="M405.5,59.8 v-6.4" stroke="#5a5a5a" stroke-width="0.8"/><polygon points="405.5,51.8 404.3,54.4 406.7,54.4" fill="#5a5a5a"/><g opacity="0.8" fill="#d9dce3" stroke="#b8bcc6" stroke-width="0.8" stroke-linejoin="round"><rect x="415.6" y="56.599999999999994" width="5.6000000000000005" height="5.6000000000000005"/><polygon points="415.6,56.599999999999994 418.40000000000003,53.8 424.0,53.8 421.2,56.599999999999994"/><polygon points="421.2,56.599999999999994 424.0,53.8 424.0,59.400000000000006 421.2,62.2"/></g><polygon points="435.2,53 439.8,55.4 435.2,57.8 430.6,55.4" fill="#9ed6f2"/><polygon points="430.6,55.4 435.2,57.8 435.2,63 430.6,60.6" fill="#5cb2e2"/><polygon points="439.8,55.4 435.2,57.8 435.2,63 439.8,60.6" fill="#3f97cc"/><g opacity="1" fill="#8ec3e6" stroke="#5f6872" stroke-width="0.8" stroke-linejoin="round"><rect x="444.8" y="55.599999999999994" width="7.6000000000000005" height="7.6000000000000005"/><polygon points="444.8,55.599999999999994 447.6,52.8 455.2,52.8 452.4,55.599999999999994"/><polygon points="452.4,55.599999999999994 455.2,52.8 455.2,60.400000000000006 452.4,63.2"/></g><g opacity="1" fill="none" stroke="#5f6872" stroke-width="0.8" stroke-linejoin="round"><rect x="459.40000000000003" y="55.599999999999994" width="7.6000000000000005" height="7.6000000000000005"/><polygon points="459.40000000000003,55.599999999999994 462.20000000000005,52.8 469.8,52.8 467.0,55.599999999999994"/><polygon points="467.0,55.599999999999994 469.8,52.8 469.8,60.400000000000006 467.0,63.2"/></g><path d="M462.20000000000005,52.8 V60.400000000000006 H469.8 M462.20000000000005,60.400000000000006 L459.40000000000003,63.2" fill="none" stroke="#5a88b0" stroke-width="0.6"/><g opacity="1" fill="#ffffff" stroke="#5f6872" stroke-width="0.8" stroke-linejoin="round"><rect x="474.5" y="55.599999999999994" width="7.6000000000000005" height="7.6000000000000005"/><polygon points="474.5,55.599999999999994 477.3,52.8 484.9,52.8 482.09999999999997,55.599999999999994"/><polygon points="482.09999999999997,55.599999999999994 484.9,52.8 484.9,60.400000000000006 482.09999999999997,63.2"/></g><polygon points="474.5,55.599999999999994 477.3,52.8 484.9,52.8 482.09999999999997,55.599999999999994" fill="#7fbbe2" stroke="#5f6872" stroke-width="0.8"/><g opacity="0.85" fill="#e2e4ea" stroke="#c0c4cc" stroke-width="0.8" stroke-linejoin="round"><rect x="489.6" y="55.599999999999994" width="7.6000000000000005" height="7.6000000000000005"/><polygon points="489.6,55.599999999999994 492.40000000000003,52.8 500.0,52.8 497.2,55.599999999999994"/><polygon points="497.2,55.599999999999994 500.0,52.8 500.0,60.400000000000006 497.2,63.2"/></g><polygon points="503.7,57.6 506.90000000000003,57.6 505.3,59.4" fill="#777"/><g opacity="1" fill="none" stroke="#6c727b" stroke-width="0.8" stroke-linejoin="round"><rect x="512.4" y="55.599999999999994" width="7.6000000000000005" height="7.6000000000000005"/><polygon points="512.4,55.599999999999994 515.1999999999999,52.8 522.8000000000001,52.8 520.0000000000001,55.599999999999994"/><polygon points="520.0000000000001,55.599999999999994 522.8000000000001,52.8 522.8000000000001,60.400000000000006 520.0000000000001,63.2"/></g><path d="M515.1999999999999,52.8 V60.400000000000006 H522.8000000000001 M515.1999999999999,60.400000000000006 L512.4,63.2" fill="none" stroke="#6c727b" stroke-width="0.6"/><g opacity="1" fill="none" stroke="#6c727b" stroke-width="0.8" stroke-linejoin="round"><rect x="527.0" y="55.599999999999994" width="7.6000000000000005" height="7.6000000000000005"/><polygon points="527.0,55.599999999999994 529.8,52.8 537.4000000000001,52.8 534.6000000000001,55.599999999999994"/><polygon points="534.6000000000001,55.599999999999994 537.4000000000001,52.8 537.4000000000001,60.400000000000006 534.6000000000001,63.2"/></g><path d="M529.8,52.8 V60.400000000000006 H537.4000000000001 M529.8,60.400000000000006 L527.0,63.2" fill="none" stroke="#5a9ad0" stroke-width="0.6"/><g opacity="1" fill="#ffffff" stroke="#6c727b" stroke-width="0.8" stroke-linejoin="round"><rect x="541.3" y="55.599999999999994" width="7.6000000000000005" height="7.6000000000000005"/><polygon points="541.3,55.599999999999994 544.0999999999999,52.8 551.7,52.8 548.9000000000001,55.599999999999994"/><polygon points="548.9000000000001,55.599999999999994 551.7,52.8 551.7,60.400000000000006 548.9000000000001,63.2"/></g><rect x="555" y="50.4" width="13.6" height="15.2" fill="#9a9ca2" stroke="#5e6066" stroke-width="0.8"/><g opacity="1" fill="#3f9bd6" stroke="#1d3d57" stroke-width="0.8" stroke-linejoin="round"><rect x="556.8" y="55.8" width="7.2" height="7.2"/><polygon points="556.8,55.8 559.5999999999999,53 566.8,53 564.0,55.8"/><polygon points="564.0,55.8 566.8,53 566.8,60.2 564.0,63"/></g><path d="M558.2,56.6 h5 v5" fill="none" stroke="#bfe2f6" stroke-width="0.7"/><polygon points="572.4,55.8 574.6,53.4 581.4,53.4 579.2,55.8" fill="#a8d8f4"/><rect x="572.4" y="55.8" width="6.8" height="6.8" fill="#66b4e6"/><polygon points="579.2,55.8 581.4,53.4 581.4,60.2 579.2,62.6" fill="#3f8fc6"/><path d="M586,58 q5,-5 10,0 q-5,5 -10,0 Z" fill="#f2f2f2" stroke="#777" stroke-width="0.8"/><circle cx="591" cy="58" r="1.9" fill="#666"/><path d="M592.6,59 l1.6,4.4" stroke="#666" stroke-width="0.9"/><polygon points="600.3,57.6 603.5,57.6 601.9,59.4" fill="#666"/><circle cx="613.2" cy="57.6" r="4.2" fill="#d3d6dd" opacity="0.85"/><circle cx="616" cy="60.4" r="2.2" fill="#c4c8d0" opacity="0.85"/><circle cx="628.3" cy="57" r="4" fill="#d3d6dd" opacity="0.85"/><path d="M622.6,62.6 l2.4,-4 h6.6 l2.4,4 Z" fill="#c8ccd4" opacity="0.85"/><polygon points="637.4,57.6 640.6,57.6 639,59.4" fill="#888"/><rect x="646.4" y="54" width="9.8" height="6.6" fill="#ececec" stroke="#5a5a5a" stroke-width="0.9"/><rect x="650.6" y="61" width="1.4" height="1.4" fill="#555"/><rect x="648.6" y="62.2" width="5.4" height="0.8" fill="#555"/><polygon points="660.6999999999999,57.6 663.9,57.6 662.3,59.4" fill="#666"/><g fill="none" stroke="#7a7a7a" stroke-width="0.7"><rect x="750.6" y="42.6" width="5.8" height="6.6"/><rect x="765.8" y="42.6" width="5.8" height="6.6"/></g><polygon points="752,45.9 754.6,44.2 754.6,47.6" fill="#8a8a8a"/><polygon points="770.2,45.9 767.6,44.2 767.6,47.6" fill="#8a8a8a"/><rect x="780.6" y="48.4" width="4.6" height="0.9" fill="#777"/><rect x="793.2" y="44" width="2" height="5.4" fill="none" stroke="#888" stroke-width="0.7"/></svg>
<div class="r" style="left:46px;top:637.5px;width:138px;height:0.9px;background:#7c7c7c;"></div>
<div class="r" style="left:46px;top:638.4px;width:138px;height:1.6px;background:#3e3e3e;"></div>
<div class="r" style="left:46px;top:637.4px;width:37px;height:2.6px;background:#8e8e8e;"></div>
<div class="r" style="left:113px;top:636.9px;width:3px;height:0.9px;background:#a8a8a8;"></div>
</body></html>
